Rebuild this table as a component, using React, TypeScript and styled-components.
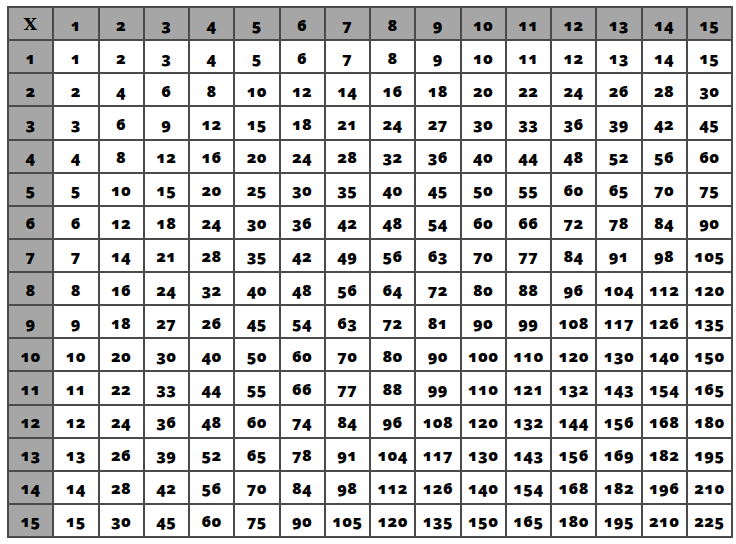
import React from "react";
import styled, { createGlobalStyle } from "styled-components";

const GlobalStyle = createGlobalStyle`
  html, body {
    margin: 0;
    padding: 0;
    background: #ffffff;
  }
  body {
    font-family: "Open Sans", "DejaVu Sans", sans-serif;
  }
`;

const Page = styled.div`
  padding: 6px 0 0 7px;
`;

const Table = styled.table`
  border-collapse: collapse;
  table-layout: fixed;
  width: 726px;
  height: 532px;
  border: 2px solid #3a3a3a;
`;

const Cell = styled.td<{ $head?: boolean }>`
  border: 2px solid #4a4a4a;
  background: ${(p) => (p.$head ? "#a6a6a6" : "#ffffff")};
  color: #000000;
  text-align: center;
  vertical-align: middle;
  padding: 2px 0 0;
  font-size: 16px;
  font-weight: 800;
  font-variant-numeric: oldstyle-nums;
  letter-spacing: 0.4px;
`;

const Corner = styled(Cell)`
  font-family: "DejaVu Serif", serif;
  font-weight: 700;
  font-size: 17px;
  padding: 0;
`;

const N = 15;

// the source chart has a couple of misprints, kept as they appear
const overrides: Record<string, number> = {
  "9-4": 26,
  "12-6": 74,
};

const value = (r: number, c: number) => overrides[`${r}-${c}`] ?? r * c;

const App: React.FC = () => {
  const idx = Array.from({ length: N }, (_, i) => i + 1);
  return (
    <Page>
      <GlobalStyle />
      <Table>
        <tbody>
          <tr>
            <Corner $head>X</Corner>
            {idx.map((c) => (
              <Cell $head key={c}>
                {c}
              </Cell>
            ))}
          </tr>
          {idx.map((r) => (
            <tr key={r}>
              <Cell $head>{r}</Cell>
              {idx.map((c) => (
                <Cell key={c}>{value(r, c)}</Cell>
              ))}
            </tr>
          ))}
        </tbody>
      </Table>
    </Page>
  );
};

export default App;
